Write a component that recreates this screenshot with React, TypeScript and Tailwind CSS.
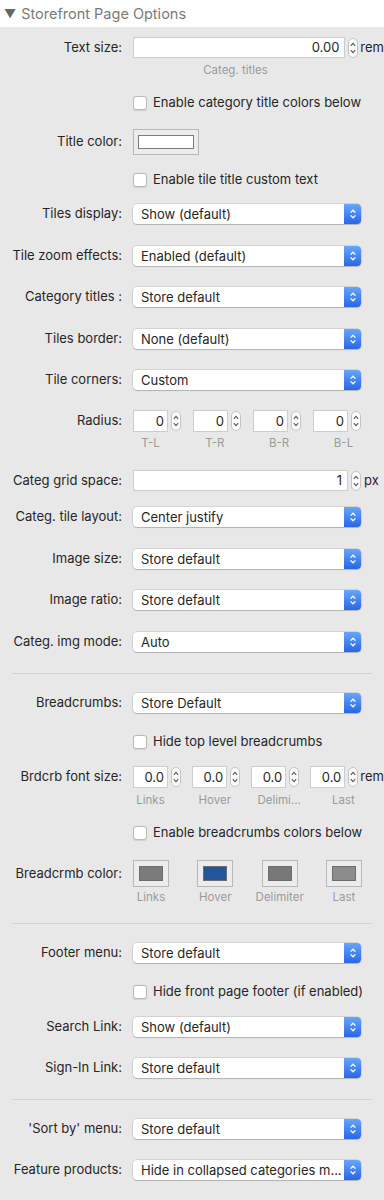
import React from "react";

const font = { fontFamily: 'Inter, "Liberation Sans", Arial, sans-serif' };

function Stepper() {
  return (
    <svg width="10" height="20" viewBox="0 0 10 20" className="shrink-0">
      <rect x="0.5" y="0.5" width="9" height="19" rx="4.5" fill="#fbfbfb" stroke="#c4c4c4" />
      <path d="M2.8 7.8 L5 5.4 L7.2 7.8" fill="none" stroke="#555" strokeWidth="1.1" />
      <path d="M2.8 12.2 L5 14.6 L7.2 12.2" fill="none" stroke="#555" strokeWidth="1.1" />
    </svg>
  );
}

function Label({ children }: { children: React.ReactNode }) {
  return <div className="w-[122px] shrink-0 text-right text-[13px] text-[#262626] whitespace-nowrap">{children}</div>;
}

function Select({ label, value, mt }: { label: string; value: string; mt: string }) {
  return (
    <div className={`flex items-center h-[20px] ${mt}`}>
      <Label>{label}</Label>
      <div className="ml-[11px] w-[228px] h-[20px] flex bg-white rounded-[4px] shadow-[0_0_0_0.5px_rgba(0,0,0,0.18),0_1px_1px_rgba(0,0,0,0.15)]">
        <div className="flex-1 pl-[8px] text-[13px] text-[#262626] leading-[20px] whitespace-nowrap overflow-hidden">{value}</div>
        <div className="w-[17px] h-[20px] rounded-r-[4px] bg-linear-to-b from-[#68a5fa] to-[#2965e6] flex items-center justify-center">
          <svg width="8" height="12" viewBox="0 0 8 12">
            <path d="M1.6 4.6 L4 2.2 L6.4 4.6" fill="none" stroke="#fff" strokeWidth="1.3" />
            <path d="M1.6 7.4 L4 9.8 L6.4 7.4" fill="none" stroke="#fff" strokeWidth="1.3" />
          </svg>
        </div>
      </div>
    </div>
  );
}

function Check({ text, mt }: { text: string; mt: string }) {
  return (
    <div className={`flex items-center h-[20px] ${mt}`}>
      <div className="w-[133px] shrink-0" />
      <div className="w-[14px] h-[14px] bg-white rounded-[3px] border border-[#b9b9b9] shadow-[0_0.5px_1px_rgba(0,0,0,0.1)]" />
      <div className="ml-[6px] text-[13px] text-[#262626] whitespace-nowrap">{text}</div>
    </div>
  );
}

function Divider({ mt }: { mt: string }) {
  return <div className={`ml-[12px] w-[360px] h-px bg-[#d2d2d2] ${mt}`} />;
}

function SmallNum({ value }: { value: string }) {
  return (
    <div className="flex items-center gap-[3px]">
      <div className="w-[35px] h-[22px] bg-white border border-[#cdcdcd] text-right pr-[3px] text-[13px] leading-[20px] text-[#262626]">{value}</div>
      <Stepper />
    </div>
  );
}

function Captions({ items, mt, boxW }: { items: string[]; mt: string; boxW: string }) {
  return (
    <div className={`flex h-[16px] items-center ${mt}`}>
      <div className="w-[133px] shrink-0" />
      <div className="w-[228px] flex justify-between">
        {items.map((t) => (
          <div key={t} className={`${boxW} flex justify-center text-[11.5px] text-[#9b9b9b] whitespace-nowrap`}>{t}</div>
        ))}
      </div>
    </div>
  );
}

function Swatch({ color }: { color: string }) {
  return (
    <div className="w-[36px] h-[27px] border border-[#b8b8b8] bg-[#ececec] p-[5px]">
      <div className="w-full h-full border border-[#6d6d6d]" style={{ backgroundColor: color }} />
    </div>
  );
}

export default function App() {
  return (
    <div className="w-[384px] min-h-[1200px] bg-[#e8e8e8] overflow-hidden pb-[20px]" style={font}>
      <div className="h-[27px] bg-white flex items-center pl-[4px]">
        <span className="text-[12px] text-[#666]">▼</span>
        <span className="ml-[5px] text-[14.5px] text-[#7a7a7a]">Storefront Page Options</span>
      </div>

      <div className="flex items-center h-[21px] mt-[10px]">
        <Label>Text size:</Label>
        <div className="ml-[11px] w-[215px] h-[21px] bg-white border border-[#cdcdcd] text-right pr-[5px] text-[13px] leading-[19px] text-[#262626]">0.00</div>
        <div className="ml-[3px]"><Stepper /></div>
        <div className="ml-[2px] text-[13px] text-[#262626]">rem</div>
      </div>
      <div className="flex h-[16px] items-center mt-[5px]">
        <div className="w-[133px] shrink-0" />
        <div className="w-[205px] text-center text-[11.5px] text-[#9b9b9b]">Categ. titles</div>
      </div>

      <Check text="Enable category title colors below" mt="mt-[14px]" />

      <div className="flex items-center h-[26px] mt-[16px]">
        <Label>Title color:</Label>
        <div className="ml-[11px] w-[66px] h-[26px] border border-[#b8b8b8] bg-[#ececec] px-[4px] py-[5px]">
          <div className="w-full h-full bg-white border border-[#7a7a7a]" />
        </div>
      </div>

      <Check text="Enable tile title custom text" mt="mt-[15px]" />

      <Select label="Tiles display:" value="Show (default)" mt="mt-[14px]" />
      <Select label="Tile zoom effects:" value="Enabled (default)" mt="mt-[22px]" />
      <Select label="Category titles :" value="Store default" mt="mt-[21px]" />
      <Select label="Tiles border:" value="None (default)" mt="mt-[22px]" />
      <Select label="Tile corners:" value="Custom" mt="mt-[21px]" />

      <div className="flex items-center h-[22px] mt-[20px]">
        <Label>Radius:</Label>
        <div className="ml-[11px] w-[228px] flex justify-between">
          <SmallNum value="0" />
          <SmallNum value="0" />
          <SmallNum value="0" />
          <SmallNum value="0" />
        </div>
      </div>
      <Captions items={["T-L", "T-R", "B-R", "B-L"]} mt="mt-[4px]" boxW="w-[35px]" />

      <div className="flex items-center h-[21px] mt-[18px]">
        <Label>Categ grid space:</Label>
        <div className="ml-[11px] w-[215px] h-[21px] bg-white border border-[#cdcdcd] text-right pr-[5px] text-[13px] leading-[19px] text-[#262626]">1</div>
        <div className="ml-[3px]"><Stepper /></div>
        <div className="ml-[3px] text-[13px] text-[#262626]">px</div>
      </div>

      <Select label="Categ. tile layout:" value="Center justify" mt="mt-[16px]" />
      <Select label="Image size:" value="Store default" mt="mt-[22px]" />
      <Select label="Image ratio:" value="Store default" mt="mt-[21px]" />
      <Select label="Categ. img mode:" value="Auto" mt="mt-[22px]" />

      <Divider mt="mt-[21px]" />

      <Select label="Breadcrumbs:" value="Store Default" mt="mt-[19px]" />
      <Check text="Hide top level breadcrumbs" mt="mt-[19px]" />

      <div className="flex items-center h-[22px] mt-[14px]">
        <Label>Brdcrb font size:</Label>
        <div className="ml-[11px] w-[228px] flex justify-between">
          <SmallNum value="0.0" />
          <SmallNum value="0.0" />
          <SmallNum value="0.0" />
          <SmallNum value="0.0" />
        </div>
        <div className="ml-[2px] text-[13px] text-[#262626]">rem</div>
      </div>
      <Captions items={["Links", "Hover", "Delimi...", "Last"]} mt="mt-[5px]" boxW="w-[35px]" />

      <Check text="Enable breadcrumbs colors below" mt="mt-[14px]" />

      <div className="flex items-center h-[27px] mt-[17px]">
        <Label>Breadcrmb color:</Label>
        <div className="ml-[11px] w-[229px] flex justify-between">
          <Swatch color="#7b7b7b" />
          <Swatch color="#22559c" />
          <Swatch color="#787878" />
          <Swatch color="#8c8c8c" />
        </div>
      </div>
      <div className="flex h-[16px] items-center mt-[3px]">
        <div className="w-[133px] shrink-0" />
        <div className="w-[229px] flex justify-between">
          {["Links", "Hover", "Delimiter", "Last"].map((t) => (
            <div key={t} className="w-[36px] flex justify-center text-[11.5px] text-[#9b9b9b] whitespace-nowrap">{t}</div>
          ))}
        </div>
      </div>

      <Divider mt="mt-[17px]" />

      <Select label="Footer menu:" value="Store default" mt="mt-[19px]" />
      <Check text="Hide front page footer (if enabled)" mt="mt-[19px]" />
      <Select label="Search Link:" value="Show (default)" mt="mt-[15px]" />
      <Select label="Sign-In Link:" value="Store default" mt="mt-[21px]" />

      <Divider mt="mt-[21px]" />

      <Select label="'Sort by' menu:" value="Store default" mt="mt-[19px]" />
      <Select label="Feature products:" value="Hide in collapsed categories m..." mt="mt-[21px]" />
    </div>
  );
}
